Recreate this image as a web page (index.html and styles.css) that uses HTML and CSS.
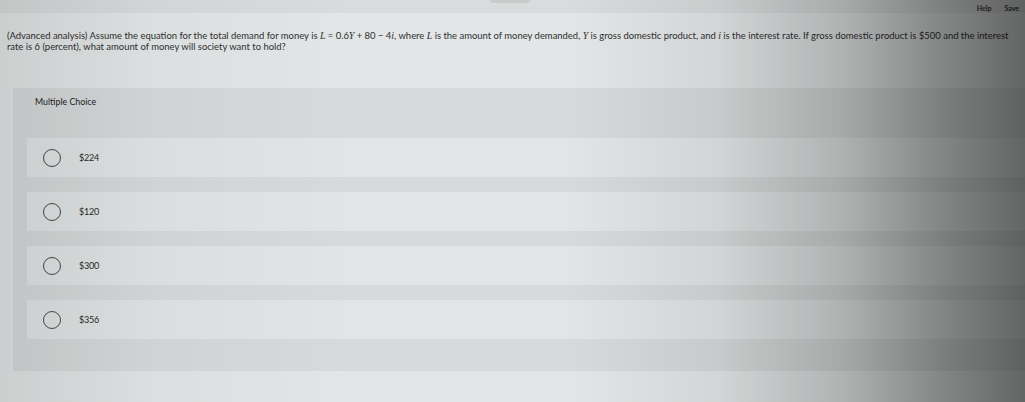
FILE: index.html
```html
<!DOCTYPE html>
<html lang="en">
<head>
<meta charset="utf-8">
<title>Multiple Choice</title>
<link rel="stylesheet" href="styles.css">
</head>
<body>
<div class="page">
  <header class="topbar">
    <span class="tab"></span>
    <nav class="toplinks"><span>Help</span><span>Save</span></nav>
  </header>
  <p class="question">(Advanced analysis) Assume the equation for the total demand for money is <i>L</i> = 0.6<i>Y</i> + 80 − 4<i>i</i>, where <i>L</i> is the amount of money demanded, <i>Y</i> is gross domestic product, and <i>i</i> is the interest rate. If gross domestic product is $500 and the interest<br>rate is 6 (percent), what amount of money will society want to hold?</p>
  <section class="card">
    <div class="card-head">Multiple Choice</div>
    <ul class="options">
      <li class="option"><span class="radio"></span><span class="label">$224</span></li>
      <li class="option"><span class="radio"></span><span class="label">$120</span></li>
      <li class="option"><span class="radio"></span><span class="label">$300</span></li>
      <li class="option"><span class="radio"></span><span class="label">$356</span></li>
    </ul>
  </section>
  <div class="shade"></div>
</div>
</body>
</html>
```
FILE: styles.css
```css
html, body {
  margin: 0;
  padding: 0;
}
body {
  background: #e3e6e6;
  font-family: Lato, "Open Sans", sans-serif;
  color: #2e2f30;
  overflow: hidden;
}
.page {
  position: relative;
  width: 1025px;
  height: 402px;
  overflow: hidden;
}
.topbar {
  height: 13px;
  background: #d9dcdc;
  display: flex;
  justify-content: space-between;
  align-items: center;
}
.tab {
  width: 40px;
  height: 3px;
  margin-left: 490px;
  margin-top: -10px;
  background: #c9cbcb;
  border-radius: 0 0 4px 4px;
}
.toplinks {
  display: flex;
  gap: 13px;
  font-size: 7px;
  font-weight: 700;
  color: #3a3a3a;
  margin-right: 6px;
  padding-top: 2px;
}
.question {
  margin: 18px 0 0 7px;
  font-size: 9.45px;
  line-height: 10.5px;
  white-space: nowrap;
}
.question i {
  font-family: "Liberation Serif", serif;
  font-size: 9.8px;
}
.card {
  margin: 36px 0 0 13px;
  background: #d7dada;
  padding-bottom: 32px;
}
.card-head {
  height: 50px;
  padding: 8px 0 0 22px;
  box-sizing: border-box;
  font-size: 8.8px;
  color: #222;
}
.options {
  list-style: none;
  margin: 0;
  padding: 0 0 0 14px;
  display: flex;
  flex-direction: column;
  gap: 15px;
}
.option {
  height: 39px;
  background: #e2e5e5;
  display: flex;
  align-items: center;
}
.radio {
  width: 16px;
  height: 16px;
  border: 1.4px solid #4a4a4a;
  border-radius: 50%;
  margin-left: 16px;
  flex: none;
}
.label {
  margin-left: 18px;
  font-size: 9px;
  color: #2a2a2a;
  letter-spacing: -0.2px;
}
.shade {
  position: absolute;
  inset: 0;
  pointer-events: none;
  background:
    linear-gradient(to right,
      rgba(0,0,0,0.10) 0%,
      rgba(0,0,0,0.03) 15%,
      rgba(0,0,0,0.0) 35%,
      rgba(0,0,0,0.0) 55%,
      rgba(0,0,0,0.07) 70%,
      rgba(0,0,0,0.22) 82%,
      rgba(0,0,0,0.42) 92%,
      rgba(0,0,0,0.56) 100%);
}
```
